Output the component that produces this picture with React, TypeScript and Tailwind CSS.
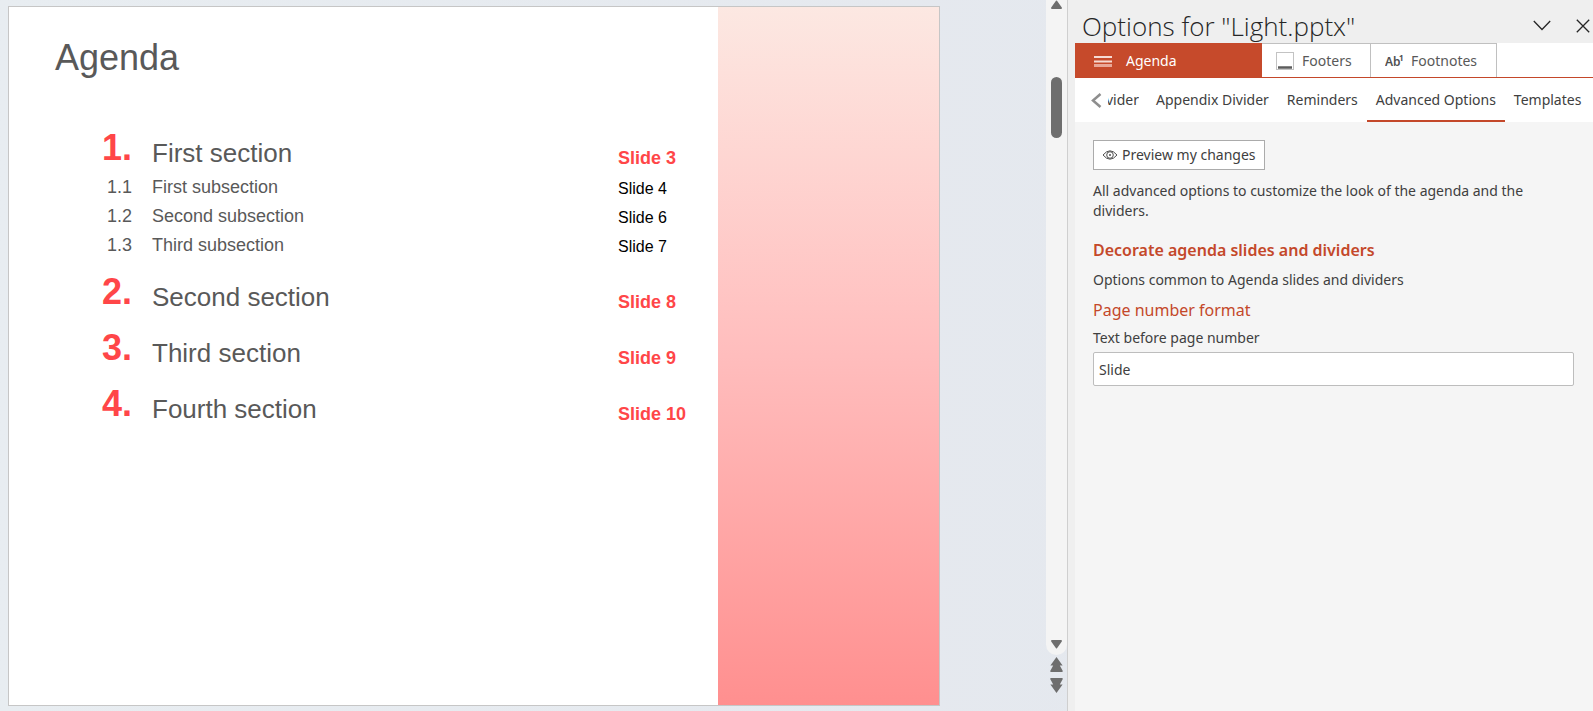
import React from "react";

type Entry = { number: string; title: string; page: string };
type Section = Entry & { children?: Entry[] };

const sections: Section[] = [
  {
    number: "1.",
    title: "First section",
    page: "Slide 3",
    children: [
      { number: "1.1", title: "First subsection", page: "Slide 4" },
      { number: "1.2", title: "Second subsection", page: "Slide 6" },
      { number: "1.3", title: "Third subsection", page: "Slide 7" },
    ],
  },
  { number: "2.", title: "Second section", page: "Slide 8" },
  { number: "3.", title: "Third section", page: "Slide 9" },
  { number: "4.", title: "Fourth section", page: "Slide 10" },
];

const subTabs = ["Appendix Divider", "Reminders", "Advanced Options", "Templates"];

function Slide() {
  return (
    <article className="flex min-w-0 flex-1 border border-[#c6c6c6] bg-white font-['Liberation_Sans',Arial,sans-serif] text-[#595959]">
      <div className="min-w-0 flex-1">
        <h1 className="mt-[31px] ml-[46px] text-[36px] leading-10">Agenda</h1>
        <ol className="mt-[54px] flex flex-col gap-[15px] pl-[83px]">
          {sections.map((s) => (
            <li key={s.number}>
              <div className="flex h-[41px] items-start">
                <span className="w-10 text-right text-[36px] leading-[31px] font-bold text-[#ff4648]">{s.number}</span>
                <span className="ml-5 flex-1 text-[26px] leading-[43px]">{s.title}</span>
                <span className="w-[100px] text-[18px] leading-[53px] font-bold text-[#ff4648]">{s.page}</span>
              </div>
              {s.children && (
                <ol className="pb-px">
                  {s.children.map((c) => (
                    <li key={c.number} className="flex h-[29px] items-start text-[18px] leading-[29px]">
                      <span className="w-10 text-right">{c.number}</span>
                      <span className="ml-5 flex-1">{c.title}</span>
                      <span className="w-[100px] text-base leading-[31px] text-black">{c.page}</span>
                    </li>
                  ))}
                </ol>
              )}
            </li>
          ))}
        </ol>
      </div>
      <div className="w-[221px] shrink-0 bg-linear-to-b from-[#fce8e2] via-[#ffbdbd] to-[#ff8f8f]" />
    </article>
  );
}

function ScrollBar() {
  return (
    <div className="flex w-[21px] shrink-0 flex-col items-center text-[#6e6e6e]">
      <div className="flex w-full flex-1 flex-col items-center rounded-b-[11px] bg-[#f4f4f4] pb-1.5">
        <button aria-label="Scroll up" className="block">
          <svg width="11" height="9" viewBox="0 0 11 9" fill="currentColor">
            <path d="M5 .8Q5.500 0 6 .8L10.800 7.600Q11.300 9 10 9H1Q-.3 9 .2 7.600Z" />
          </svg>
        </button>
        <div className="mt-[68px] h-[61px] w-[11px] rounded-full bg-[#6e6e6e]" />
        <button aria-label="Scroll down" className="mt-auto block">
          <svg width="11" height="9" viewBox="0 0 11 9" fill="currentColor">
            <path d="M1 0H10Q11.300 0 10.800 1.400L6 8.200Q5.500 9 5 8.200L.2 1.400Q-.3 0 1 0Z" />
          </svg>
        </button>
      </div>
      <div className="flex flex-col gap-[6px] pt-[2px] pb-[18px]">
        <button aria-label="Previous slide">
          <svg className="block" width="13" height="15" viewBox="0 0 13 15" fill="currentColor">
            <path d="M6.500 0 12.600 8.500H9.800L12.800 14Q12.800 15 12 15H1Q.2 15 .2 14L3.200 8.500H.4Z" />
          </svg>
        </button>
        <button aria-label="Next slide">
          <svg className="block" width="13" height="15" viewBox="0 0 13 15" fill="currentColor">
            <path d="M6.500 15 12.600 6.500H9.800L12.800 1Q12.800 0 12 0H1Q.2 0 .2 1L3.200 6.500H.4Z" />
          </svg>
        </button>
      </div>
    </div>
  );
}

function OptionsPanel() {
  return (
    <aside className="flex w-[525px] shrink-0 flex-col bg-[#efefef] pl-[7px] font-['Noto_Sans','Open_Sans',sans-serif] text-[#404040]">
      <header className="flex h-[43px] items-center pt-2 pl-[7px]">
        <h2 className="flex-1 font-['Open_Sans','Noto_Sans',sans-serif] text-[26px] leading-8 font-light whitespace-nowrap text-[#262626]">
          Options for "Light.pptx"
        </h2>
        <button aria-label="Task pane options" className="mr-[25px]">
          <svg className="block" width="18" height="11" viewBox="0 0 18 11" fill="none" stroke="#262626" strokeWidth="1.3">
            <path d="M.8 1 9 9.500 17.200 1" />
          </svg>
        </button>
        <button aria-label="Close" className="mr-[3px]">
          <svg className="block" width="14" height="14" viewBox="0 0 14 14" fill="none" stroke="#262626" strokeWidth="1.3">
            <path d="M.8.8 13.200 13.200M13.200.8.8 13.200" />
          </svg>
        </button>
      </header>

      <nav className="flex h-[35px] border-b border-[#c4482a] bg-white text-sm">
        <button className="flex w-[187px] items-center gap-[14px] bg-[#c64a2b] pt-0.5 pl-[19px] text-white">
          <svg width="18" height="11" viewBox="0 0 18 11">
            <path d="M0 1H18M0 5.500H18" stroke="#f6dbd4" strokeWidth="2" />
            <path d="M0 9.500H18" stroke="#e9a898" strokeWidth="3" />
          </svg>
          Agenda
        </button>
        <button className="flex w-[108px] items-center gap-2 border-t border-[#c0c0c0] pl-[14px] text-[#595959]">
          <svg width="18" height="18" viewBox="0 0 18 18">
            <rect x=".5" y=".5" width="17" height="17" fill="#fff" stroke="#c3c3c3" />
            <path d="M2 15.500H16" stroke="#5c5c5c" strokeWidth="2.500" />
          </svg>
          Footers
        </button>
        <button className="flex w-[127px] items-center gap-2 border-x border-t border-[#c0c0c0] pl-[14px] text-[#595959]">
          <svg width="18" height="16" viewBox="0 0 18 16" fill="#505050" aria-hidden="true">
            <text x="0" y="13" fontSize="12" fontWeight="600">Ab</text>
            <text x="14" y="8" fontSize="8" fontWeight="700">1</text>
          </svg>
          Footnotes
        </button>
      </nav>

      <nav className="flex h-11 items-stretch overflow-hidden bg-white text-sm whitespace-nowrap">
        <button aria-label="Scroll tabs left" className="ml-4">
          <svg className="block" width="11" height="15" viewBox="0 0 11 15" fill="none" stroke="#8e8e8e" strokeWidth="2.500">
            <path d="M9.500 1 2 7.500 9.500 14" />
          </svg>
        </button>
        <button className="ml-1.5 flex w-[31px] items-center justify-end overflow-hidden">Divider</button>
        <div className="ml-2 flex">
          {subTabs.map((t) => (
            <button
              key={t}
              className={
                t === "Advanced Options"
                  ? "border-t-2 border-b-2 border-t-transparent border-b-[#c4482a] px-[9px]"
                  : "border-y-2 border-transparent px-[9px]"
              }
            >
              {t}
            </button>
          ))}
        </div>
      </nav>

      <section className="flex flex-1 flex-col items-start bg-[#f5f5f5] pt-[18px] pr-[19px] pl-[18px] text-sm leading-5">
        <button className="flex h-[30px] items-center gap-1 border border-[#ababab] bg-white px-2">
          <svg width="16" height="10" viewBox="0 0 16 10" fill="none" stroke="#505050">
            <path d="M1 5Q4.500.8 8 .8T15 5Q11.500 9.200 8 9.200T1 5Z" />
            <circle cx="8" cy="5" r="3.300" />
            <circle cx="8" cy="5" r="1" fill="#505050" stroke="none" />
          </svg>
          Preview my changes
        </button>
        <p className="mt-[11px]">All advanced options to customize the look of the agenda and the dividers.</p>
        <h3 className="mt-[17px] text-base leading-6 font-semibold text-[#c4482a]">Decorate agenda slides and dividers</h3>
        <p className="mt-2">Options common to Agenda slides and dividers</p>
        <h4 className="mt-2 text-base leading-6 text-[#c4482a]">Page number format</h4>
        <label htmlFor="page-prefix" className="mt-1.5">Text before page number</label>
        <input
          id="page-prefix"
          type="text"
          defaultValue="Slide"
          className="mt-1 h-[34px] w-full rounded-[2px] border border-[#bdbdbd] bg-white px-[5px] outline-none"
        />
      </section>
    </aside>
  );
}

export default function App() {
  return (
    <main className="flex h-screen min-h-[640px] bg-linear-to-r from-[#e8edf1] to-[#e3e6ed]">
      <div className="flex min-w-0 flex-1 pt-1.5 pr-[106px] pb-[5px] pl-2">
        <Slide />
      </div>
      <ScrollBar />
      <div className="w-px shrink-0 bg-[#cfcfcf]" />
      <OptionsPanel />
    </main>
  );
}
